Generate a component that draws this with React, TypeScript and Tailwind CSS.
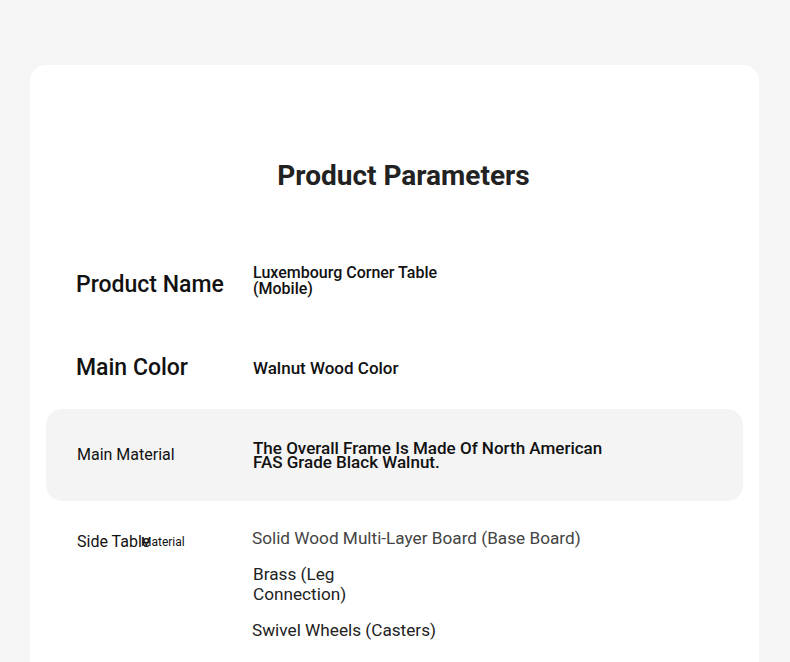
import React from "react";

export default function App() {
  return (
    <div className="min-h-[662px] w-full bg-[#f5f5f5] pt-[65px] pl-[30px]" style={{ fontFamily: "Roboto, 'Noto Sans', sans-serif" }}>
      <div className="w-[729px] h-[620px] rounded-t-[16px] bg-white px-[16px]">
        <div className="flex justify-center pt-[95px] pb-[50px] pl-[18px]">
          <h1 className="text-[28px] leading-[32px] font-bold text-[#222]">Product Parameters</h1>
        </div>

        <div className="flex h-[86px] items-center px-[30px]">
          <div className="w-[177px] text-[23px] font-medium text-[#111]">Product Name</div>
          <div className="-mt-[8px] max-w-[200px] text-[16px] leading-[16px] font-medium text-[#111]">Luxembourg Corner Table (Mobile)</div>
        </div>

        <div className="flex h-[81px] items-center px-[30px]">
          <div className="w-[177px] text-[23px] font-medium text-[#111]">Main Color</div>
          <div className="text-[17px] font-medium text-[#111]">Walnut Wood Color</div>
        </div>

        <div className="flex h-[92px] items-center rounded-[16px] bg-[#f4f4f4] px-[31px]">
          <div className="w-[176px] text-[16px] text-[#111]">Main Material</div>
          <div className="max-w-[360px] text-[17px] leading-[14px] font-medium text-[#111]">The Overall Frame Is Made Of North American FAS Grade Black Walnut.</div>
        </div>

        <div className="flex items-start px-[31px] pt-[27px]">
          <div className="flex w-[175px] items-center pt-[4px] text-[#111]">
            <span className="w-[64px] whitespace-nowrap text-[16px] leading-[20px]">Side Table</span>
            <span className="text-[12px] leading-[20px]">Material</span>
          </div>
          <div className="flex flex-col gap-[16px] text-[17.2px] leading-[20px]">
            <div className="text-[#444]">Solid Wood Multi-Layer Board (Base Board)</div>
            <div className="w-[120px] pl-[1px] text-[#222]">Brass (Leg Connection)</div>
            <div className="text-[#222]">Swivel Wheels (Casters)</div>
          </div>
        </div>
      </div>
    </div>
  );
}
